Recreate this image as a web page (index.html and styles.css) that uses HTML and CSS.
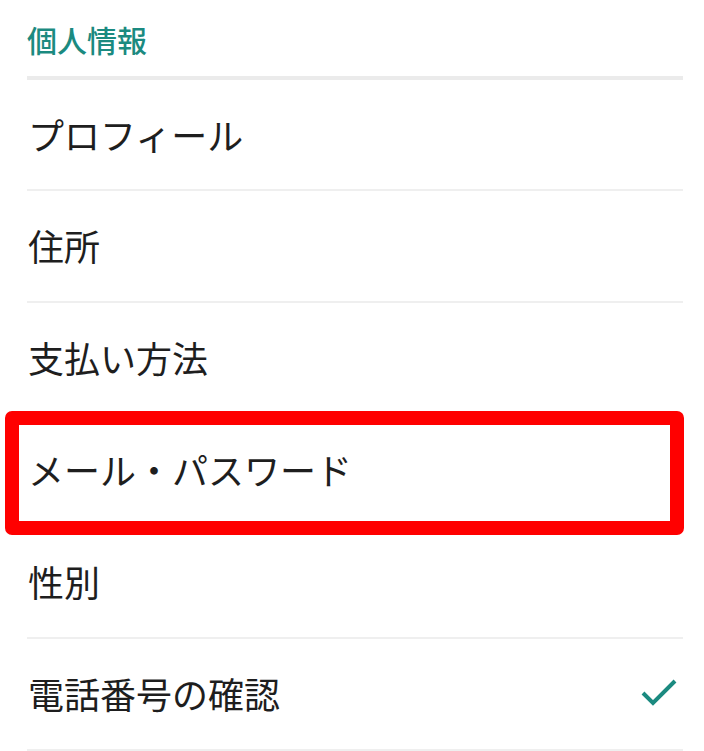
FILE: index.html
```html
<!DOCTYPE html>
<html lang="ja">
<head>
<meta charset="utf-8">
<link rel="stylesheet" href="styles.css">
</head>
<body>
<div class="page">
  <div class="section-head">個人情報</div>
  <ul class="list">
    <li class="row">プロフィール</li>
    <li class="row">住所</li>
    <li class="row">支払い方法</li>
    <li class="row highlighted">メール・パスワード<span class="mark"></span></li>
    <li class="row">性別</li>
    <li class="row">電話番号の確認
      <svg class="check" viewBox="0 0 36 28" width="36" height="28"><path d="M2 14 L12 24 L34 2" fill="none" stroke="#1b8a80" stroke-width="4"/></svg>
    </li>
  </ul>
</div>
</body>
</html>
```
FILE: styles.css
```css
html, body {
  margin: 0;
  padding: 0;
  background: #fff;
}
body {
  font-family: "Noto Sans CJK JP", "Noto Sans", sans-serif;
  color: #1e1e1e;
  overflow: hidden;
}
.page {
  padding: 0 21px 0 27px;
}
.section-head {
  height: 80px;
  box-sizing: border-box;
  padding-top: 18px;
  font-size: 30px;
  font-weight: 500;
  line-height: 42px;
  color: #1b8a80;
  border-bottom: 4px solid #ebebeb;
}
.list {
  list-style: none;
  margin: 0;
  padding: 0;
}
.row {
  position: relative;
  height: 112px;
  box-sizing: border-box;
  border-bottom: 2px solid #efefef;
  display: flex;
  align-items: center;
  justify-content: space-between;
  font-size: 36px;
  padding-left: 1px;
  padding-bottom: 2px;
}
.row:first-child {
  height: 111px;
}
.check {
  margin-right: 6px;
}
.mark {
  position: absolute;
  left: -22px;
  right: -1px;
  top: -4px;
  bottom: -10px;
  border: 14px solid #ff0000;
  border-radius: 7px;
}
```
